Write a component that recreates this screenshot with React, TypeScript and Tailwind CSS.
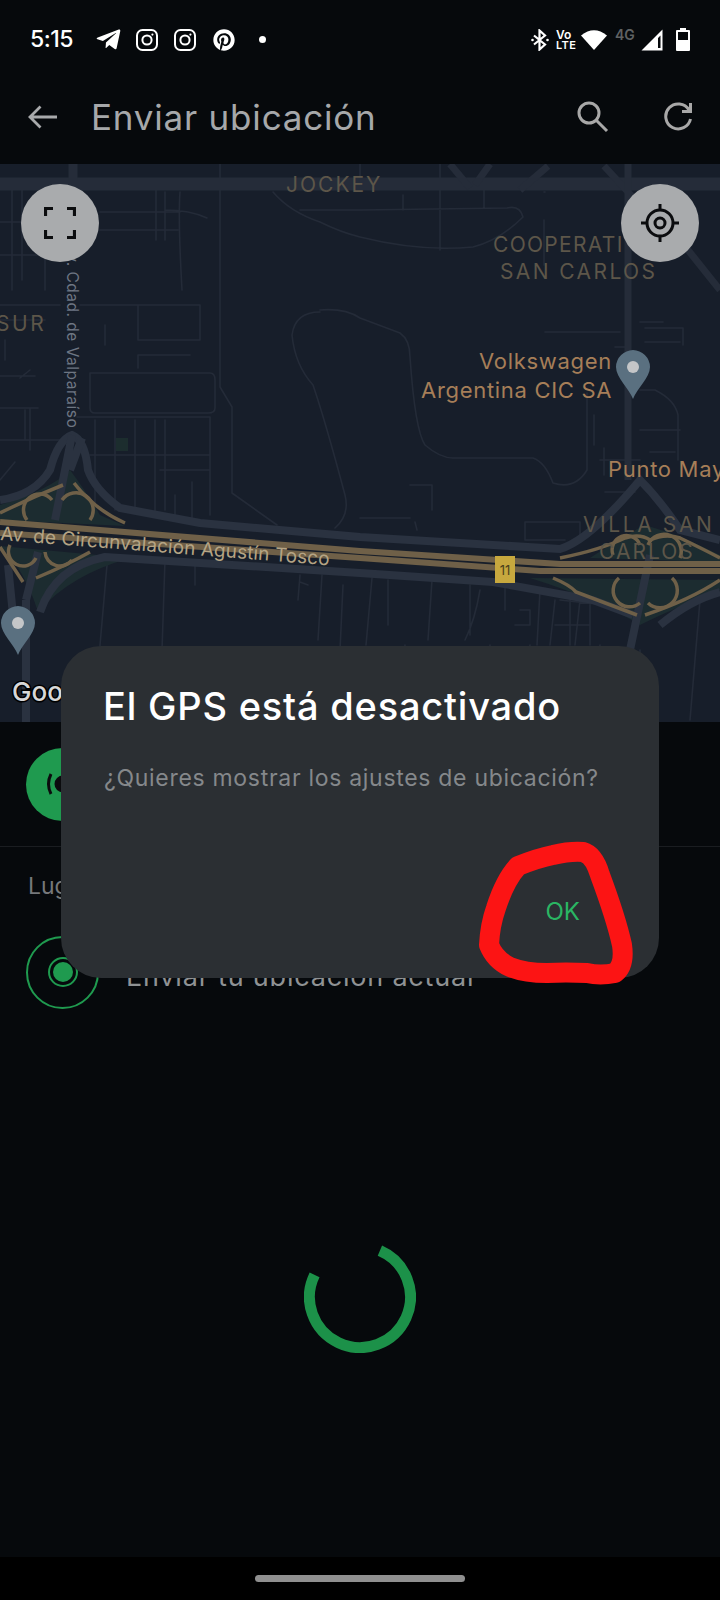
import React from "react";
import { FaTelegramPlane, FaPinterest } from "react-icons/fa";

const minorRoads = [
  "M0 188 H20 M12 180 V290 M0 222 H60 M0 255 H60 M22 180 V280 M45 180 V290 M100 212 H180 M100 230 H178 M156 190 V240 M165 192 V240 M180 192 Q178 220 182 290",
  "M165 210 Q190 210 207 218 M273 192 Q290 212 320 222 Q340 232 360 237 Q420 252 473 247 Q500 240 523 217 Q520 205 507 208 L360 210 M300 210 H360",
  "M440 164 V250 M484 190 V208 M544 220 V265 M360 164 L360 190 M403 195 V210 M544 192 H545",
  "M0 305 H60 M80 305 H200 V340 H138 V305 M138 368 V355 H190 M90 373 H210 Q215 373 215 380 V408 Q215 413 208 413 H95 Q90 413 90 408 V378 Z M77 417 H210 V515",
  "M95 420 V510 M115 420 V510 M135 420 V510 M155 420 V512 M165 420 V510 M90 455 H210 M160 470 H210 M175 495 V520 M192 482 V520",
  "M0 376 H35 M25 410 V440 M0 408 H38 M30 408 V450 M0 440 H60 M0 480 L15 462 M20 378 L30 370 M0 320 H45 M5 340 V360 M105 325 V345",
  "M220 164 V387 L232 407 V493 L277 525",
  "M320 312 Q295 312 292 335 Q295 365 313 385 Q325 420 345 495 Q350 515 335 528 M320 310 Q345 308 360 318 L400 333 Q410 340 410 357 Q415 430 425 445 Q440 458 453 458 H533 Q545 462 553 483 Q575 490 587 470 V393",
  "M545 332 H620 M640 322 H663 M645 328 H683 V345 M645 342 H680 M615 347 H625 M640 390 H655 Q675 400 678 415 V460 M640 430 H680 M650 452 H675 M600 460 H640 M605 492 H635 M594 415 V445 M604 448 V475",
  "M410 485 H432 V510 M360 518 H410 M415 522 L417 530 M525 522 H580 V535 M525 522 V540 H565",
  "M107 565 L100 645 M165 560 L162 650 M195 563 V585 M300 575 L298 600 M322 575 L318 640 M343 585 L340 650 M300 582 L308 585",
  "M372 578 L366 645 M388 580 V625 M432 580 L428 640 M470 585 V635 M480 590 Q475 620 465 640 M505 585 V610 M520 610 H530 V625 H515 M540 590 L537 645 M555 600 L550 645 M570 600 V645 M580 600 L575 645 M590 600 V645 M560 600 L605 605 M555 625 H590",
  "M700 600 L690 720 M530 645 L520 722 M490 645 L488 722 M405 645 L400 722 M340 650 L335 722 M165 650 V722 M100 645 V722 M600 645 L590 722 M640 650 V722",
];

function MapCanvas() {
  return (
    <svg viewBox="0 164 720 558" className="absolute inset-0 h-full w-full" fill="none">
      <rect x="0" y="164" width="720" height="558" fill="#171e2a" />
      <path d={minorRoads.join(" ")} stroke="#242b38" strokeWidth="1.6" strokeLinejoin="round" strokeLinecap="round" />
      <rect x="116" y="438" width="12" height="13" fill="#1c2d2e" />
      {/* main roads */}
      <path d="M0 184 H720" stroke="#252c39" strokeWidth="13" />
      <path d="M73 164 V180" stroke="#252c39" strokeWidth="9" />
      <path d="M520 190 L548 166 M604 166 L640 205 M640 190 L720 290 M450 164 L470 188 M490 164 L475 185" stroke="#252c39" strokeWidth="7" />
      <path d="M628 164 V480" stroke="#252c39" strokeWidth="7" />
      {/* interchange fills */}
      <path d="M0 505 Q50 490 70 470 Q85 490 100 515 L125 526 L0 520 Z" fill="#1c2c30" />
      <path d="M0 546 L130 558 Q70 575 38 612 Q25 570 0 546 Z" fill="#1c2c30" />
      <path d="M590 558 Q625 535 645 525 Q680 535 720 555 V562 Z" fill="#1c2c30" />
      <path d="M530 578 L720 580 V590 Q670 610 640 625 Q600 600 530 578 Z" fill="#1c2c30" />
      {/* side roads */}
      <path d="M0 500 Q35 495 50 470 Q58 440 72 435 Q85 440 88 470 Q95 490 120 508 L200 523 L360 537 L560 549 Q590 540 640 480 Q660 500 680 530 L720 540" stroke="#2a3240" strokeWidth="8" />
      <path d="M72 435 L55 520 M82 438 L70 470" stroke="#2a3240" strokeWidth="8" />
      <path d="M38 552 L26 600 M8 565 L14 625 M26 600 V722" stroke="#2a3240" strokeWidth="8" />
      <path d="M40 612 Q55 567 105 557 L360 573 L493 582 L593 600 L633 615 M650 555 L630 650 M660 625 Q690 600 720 592" stroke="#2a3240" strokeWidth="8" />
      {/* highway */}
      <path d="M0 522 L360 551 L560 564 H720" stroke="#6f6048" strokeWidth="6" />
      <path d="M0 533 L360 558 L540 571 H720" stroke="#6f6048" strokeWidth="6" />
      {/* loops */}
      <g stroke="#6f6048" strokeWidth="3.5">
        <path d="M0 513 Q30 498 63 485 M74 483 Q95 510 125 523" />
        <path d="M27 520 A15 15 0 0 1 52 500 M62 500 A15 15 0 0 1 90 520" />
        <path d="M0 547 L23 582 M90 552 Q65 566 36 578" />
        <path d="M10 545 A14 14 0 0 0 36 558 M45 552 A15 15 0 0 0 72 560" />
        <path d="M560 558 Q600 550 625 538 Q640 533 650 540 Q665 533 680 538 Q705 550 720 558" />
        <path d="M613 555 A14 14 0 0 1 640 545 M648 545 A14 14 0 0 1 680 558" />
        <path d="M553 578 Q570 585 576 592 L637 615 M645 615 Q690 600 720 580" />
        <path d="M619 578 A14 14 0 0 0 640 603 M648 603 A14 14 0 0 0 672 578" />
      </g>
      {/* shield */}
      <rect x="495" y="556" width="20" height="27" fill="#c7a83e" />
      <text x="505" y="575" textAnchor="middle" fontSize="13" fill="#4a3f1c">11</text>
      {/* labels */}
      <g fontSize="21" letterSpacing="2" fill="#5d5649">
        <text x="286" y="192">JOCKEY</text>
        <text x="493" y="252" letterSpacing="1.3">COOPERATI</text>
        <text x="500" y="279" letterSpacing="2.4">SAN CARLOS</text>
        <text x="-4" y="331" letterSpacing="2.6">SUR</text>
        <text x="583" y="532" letterSpacing="2.6">VILLA SAN</text>
        <text x="599" y="559">CARLOS</text>
      </g>
      <g fontSize="22" letterSpacing="0.7" fill="#a67e58">
        <text x="479" y="369">Volkswagen</text>
        <text x="421" y="398">Argentina CIC SA</text>
        <text x="608" y="477">Punto May</text>
      </g>
      <text x="0" y="540" fontSize="19" letterSpacing="0.1" fill="#b5a484" transform="rotate(4.4 0 540)">Av. de Circunvalación Agustín Tosco</text>
      <text x="67" y="243" fontSize="15.5" letterSpacing="0.5" fill="#6e7683" transform="rotate(90 67 243)">Av. Cdad. de Valparaíso</text>
      {/* pins */}
      <g>
        <path d="M633 350 A17.5 17.5 0 0 1 650 367 C650 378 637 388 633 399 C629 388 616 378 616 367 A17.5 17.5 0 0 1 633 350 Z" fill="#5a7080" />
        <circle cx="633" cy="367" r="6" fill="#c4c6c8" />
        <path d="M18 606 A17.5 17.5 0 0 1 35 623 C35 634 22 644 18 655 C14 644 1 634 1 623 A17.5 17.5 0 0 1 18 606 Z" fill="#5a7080" />
        <circle cx="18" cy="623" r="6" fill="#c4c6c8" />
      </g>
      <text x="12" y="701" fontSize="26" fontWeight="500" fill="#d8d8d8" stroke="#000" strokeWidth="3" paintOrder="stroke">Google</text>
    </svg>
  );
}

function Instagram() {
  return (
    <svg width="22" height="22" viewBox="0 0 22 22" fill="none" stroke="#fff" strokeWidth="2">
      <rect x="1" y="1" width="20" height="20" rx="5.5" />
      <circle cx="11" cy="11" r="4.6" />
      <circle cx="16.4" cy="5.6" r="1.1" fill="#fff" stroke="none" />
    </svg>
  );
}

function StatusBar() {
  return (
    <div className="flex h-[75px] items-center justify-between pl-[30px] pr-[30px] pt-[4px]">
      <div className="flex items-center">
        <span className="w-[65px] text-[23px] font-medium tracking-[-0.5px] text-white">5:15</span>
        <FaTelegramPlane className="mr-[14px] h-[27px] w-[27px] text-white" />
        <div className="mr-[16px]"><Instagram /></div>
        <div className="mr-[17px]"><Instagram /></div>
        <FaPinterest className="mr-[24px] h-[22px] w-[22px] text-white" />
        <div className="h-[7px] w-[7px] rounded-full bg-white" />
      </div>
      <div className="flex items-center">
        <svg width="18" height="22" viewBox="0 0 18 22" fill="none" stroke="#fff" strokeWidth="2.2" className="mr-[7px]">
          <path d="M3 6.5 L14 15.5 L8.5 20.5 V1.5 L14 6.5 L3 15.5" />
          <circle cx="1.5" cy="11" r="1.3" fill="#fff" stroke="none" />
          <circle cx="16.5" cy="11" r="1.3" fill="#fff" stroke="none" />
        </svg>
        <div className="mr-[5px] flex w-[20px] flex-col text-[12px] font-semibold leading-[10px] text-white">
          <span className="h-[10px]">Vo</span>
          <span className="h-[10px] text-[11px] tracking-[0.4px]">LTE</span>
        </div>
        <svg width="26" height="21" viewBox="0 0 26 21" className="mr-[8px]">
          <path d="M0 6.5 Q13 -4 26 6.5 L13 21 Z" fill="#fff" />
        </svg>
        <span className="mb-[9px] mr-[5px] w-[21px] text-[14px] font-semibold leading-[14px] text-[#5f6163]">4G</span>
        <svg width="22" height="22" viewBox="0 0 22 22" className="mr-[13px]">
          <path d="M21.5 0.5 V21.5 H0.5 Z M17 9 V19 H19.5 V6.5 Z" fill="#fff" fillRule="evenodd" />
        </svg>
        <svg width="14" height="23" viewBox="0 0 14 23">
          <path d="M4 0 H10 V2 H13 Q14 2 14 3 V22 Q14 23 13 23 H1 Q0 23 0 22 V3 Q0 2 1 2 H4 Z M2 4 V12 H12 V4 Z" fill="#fff" fillRule="evenodd" />
        </svg>
      </div>
    </div>
  );
}

function AppBar() {
  return (
    <div className="flex h-[89px] items-center pb-[6px]">
      <svg width="30" height="24" viewBox="0 0 30 24" fill="none" stroke="#a8aaac" strokeWidth="2.8" className="ml-[28px] mr-[33px]">
        <path d="M29 12 H2 M12.5 1.5 L2 12 L12.5 22.5" />
      </svg>
      <span className="pt-[2px] text-[35px] leading-none tracking-[0.8px] text-[#a6a8aa]">Enviar ubicación</span>
      <div className="ml-auto flex items-center">
        <svg width="32" height="32" viewBox="0 0 32 32" fill="none" stroke="#a8a8a8" strokeWidth="3" className="mr-[54px]">
          <circle cx="12" cy="12" r="10" />
          <path d="M19 19 L30 30" />
        </svg>
        <svg width="30" height="30" viewBox="0 0 30 30" fill="none" stroke="#a8a8a8" strokeWidth="3" className="mr-[27px]">
          <path d="M26 8 A12.5 12.5 0 1 0 27.5 17" />
          <path d="M27.5 1 V9.5 H19" />
        </svg>
      </div>
    </div>
  );
}

function RoundButton({ children, className }: { children: React.ReactNode; className: string }) {
  return (
    <div className={"absolute top-[20px] flex h-[78px] w-[78px] items-center justify-center rounded-full bg-[#a9abad] " + className}>
      {children}
    </div>
  );
}

export default function App() {
  return (
    <div className="relative flex h-[1600px] w-[720px] flex-col overflow-hidden bg-[#06090c] font-['Inter',sans-serif]">
      <StatusBar />
      <AppBar />
      <div className="relative h-[558px] shrink-0">
        <MapCanvas />
        <RoundButton className="left-[21px]">
          <svg width="32" height="32" viewBox="0 0 32 32" fill="none" stroke="#0b0c0e" strokeWidth="3.2">
            <path d="M1.5 9 V1.5 H9 M23 1.5 H30.5 V9 M30.5 23 V30.5 H23 M9 30.5 H1.5 V23" />
          </svg>
        </RoundButton>
        <RoundButton className="left-[621px]">
          <svg width="38" height="38" viewBox="0 0 38 38" fill="none" stroke="#0b0c0e" strokeWidth="3">
            <circle cx="19" cy="19" r="13" />
            <circle cx="19" cy="19" r="5" />
            <path d="M19 0 V6 M19 32 V38 M0 19 H6 M32 19 H38" />
          </svg>
        </RoundButton>
      </div>

      <div className="flex h-[125px] shrink-0 items-center border-b border-[#1a1d21] pl-[26px]">
        <div className="flex h-[73px] w-[73px] items-center justify-center rounded-full bg-[#1f9a4f]">
          <svg width="44" height="32" viewBox="0 0 44 32" fill="none" stroke="#0b0c0e" strokeWidth="3">
            <circle cx="22" cy="16" r="7" fill="#0b0c0e" />
            <path d="M10 6 Q5 16 10 26 M34 6 Q39 16 34 26" />
          </svg>
        </div>
      </div>
      <div className="flex h-[77px] shrink-0 items-start pl-[28px] pt-[25px] text-[23px] leading-[28px] text-[#75787b]">
        Lugares cercanos
      </div>
      <div className="flex h-[96px] shrink-0 items-center pl-[26px]">
        <div className="flex h-[73px] w-[73px] items-center justify-center rounded-full border-2 border-[#1f9a4f]">
          <div className="flex h-[30px] w-[30px] items-center justify-center rounded-full border-2 border-[#1f9a4f]">
            <div className="h-[20px] w-[20px] rounded-full bg-[#1f9a4f]" />
          </div>
        </div>
        <span className="ml-[27px] mt-[10px] text-[27px] tracking-[0.8px] text-[#8f9294]">Enviar tu ubicación actual</span>
      </div>
      <div className="flex h-[16px] shrink-0" />

      <div className="flex flex-1 items-center justify-center">
        <svg width="112" height="112" viewBox="304 1241 112 112" fill="none">
          <path d="M379.9 1250.6 A50.5 50.5 0 1 1 314.6 1274.8" stroke="#1c9149" strokeWidth="11" />
        </svg>
      </div>

      <div className="flex h-[43px] shrink-0 items-center justify-center bg-black">
        <div className="h-[7px] w-[210px] rounded-full bg-[#8f8f8f]" />
      </div>

      {/* dialog */}
      <div className="absolute left-[61px] top-[646px] flex h-[332px] w-[598px] flex-col rounded-[40px] bg-[#2b2f33]">
        <div className="ml-[42px] mt-[37px] text-[38px] font-medium leading-[46px] tracking-[0.8px] text-white">El GPS está desactivado</div>
        <div className="ml-[43px] mt-[34px] text-[23px] leading-[30px] tracking-[0.7px] text-[#85888b]">¿Quieres mostrar los ajustes de ubicación?</div>
        <div className="mt-auto mb-[54px] mr-[79px] self-end text-[24px] leading-[24px] text-[#2ab663]">OK</div>
      </div>

      {/* hand-drawn red circle */}
      <svg viewBox="0 0 720 1600" className="pointer-events-none absolute inset-0 h-full w-full" fill="none">
        <path
          d="M518 866 Q538 858 553 855 Q570 851 583 852 Q594 855 600 875 Q616 918 622 945 Q625 965 615 973 Q600 976 587 973 Q565 972 547 973 Q525 973 510 967 Q495 960 489 945 Q490 925 496 908 Q505 880 518 866 Z"
          stroke="#fc1414"
          strokeWidth="20"
          strokeLinejoin="round"
        />
      </svg>
    </div>
  );
}
